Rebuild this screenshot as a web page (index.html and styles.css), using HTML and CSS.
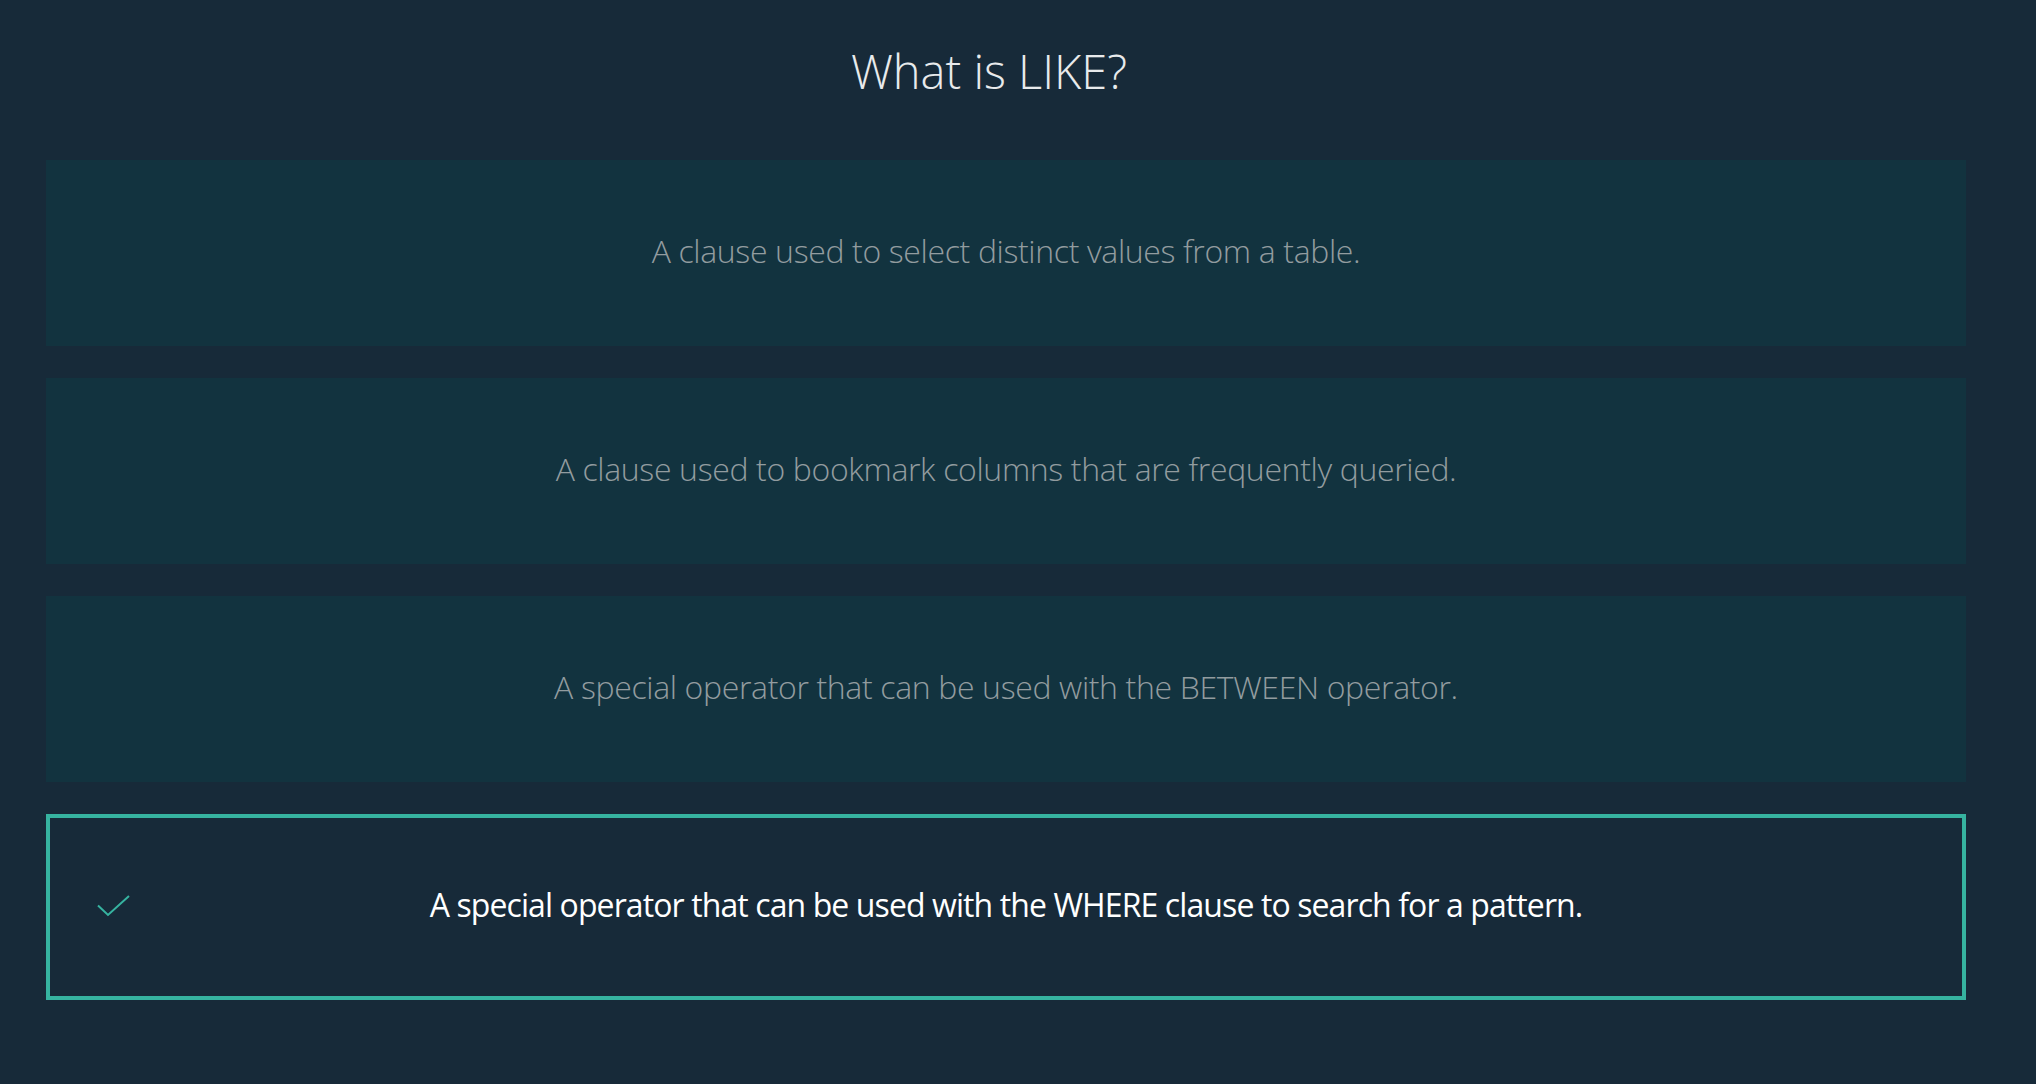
FILE: index.html
```html
<!DOCTYPE html>
<html>
<head>
<meta charset="utf-8">
<link rel="stylesheet" href="styles.css">
</head>
<body>
<main class="quiz">
  <h1 class="question">What is LIKE?</h1>
  <div class="options">
    <div class="option"><span class="text">A clause used to select distinct values from a table.</span></div>
    <div class="option"><span class="text">A clause used to bookmark columns that are frequently queried.</span></div>
    <div class="option"><span class="text">A special operator that can be used with the BETWEEN operator.</span></div>
    <div class="option correct">
      <svg class="check" width="34" height="24" viewBox="0 0 34 24"><path d="M1 10.5 L11 20 L32 1" fill="none" stroke="#36b3a0" stroke-width="2"/></svg>
      <span class="text">A special operator that can be used with the WHERE clause to search for a pattern.</span>
    </div>
  </div>
</main>
</body>
</html>
```
FILE: styles.css
```css
html, body {
  margin: 0;
  padding: 0;
  background: #172a39;
  height: 100%;
}
body {
  font-family: "Open Sans", "Noto Sans", sans-serif;
}
.quiz {
  padding: 0 70px 0 46px;
}
.question {
  margin: 0;
  padding-top: 41px;
  height: 160px;
  box-sizing: border-box;
  text-align: center;
  font-weight: 300;
  font-size: 47px;
  line-height: 60px;
  color: #e8eaec;
  padding-right: 34px;
}
.options {
  display: flex;
  flex-direction: column;
  gap: 32px;
}
.option {
  position: relative;
  height: 186px;
  box-sizing: border-box;
  padding-bottom: 5px;
  background: #12333f;
  display: flex;
  align-items: center;
  justify-content: center;
}
.text {
  font-size: 32px;
  font-weight: 300;
  color: #929c9f;
  letter-spacing: -0.35px;
}
.option.correct {
  background: #172a39;
  border: 4px solid #36b3a0;
}
.option.correct .text {
  color: #ffffff;
  font-weight: 400;
  letter-spacing: -0.9px;
}
.check {
  position: absolute;
  left: 47px;
  top: 77px;
}
```
